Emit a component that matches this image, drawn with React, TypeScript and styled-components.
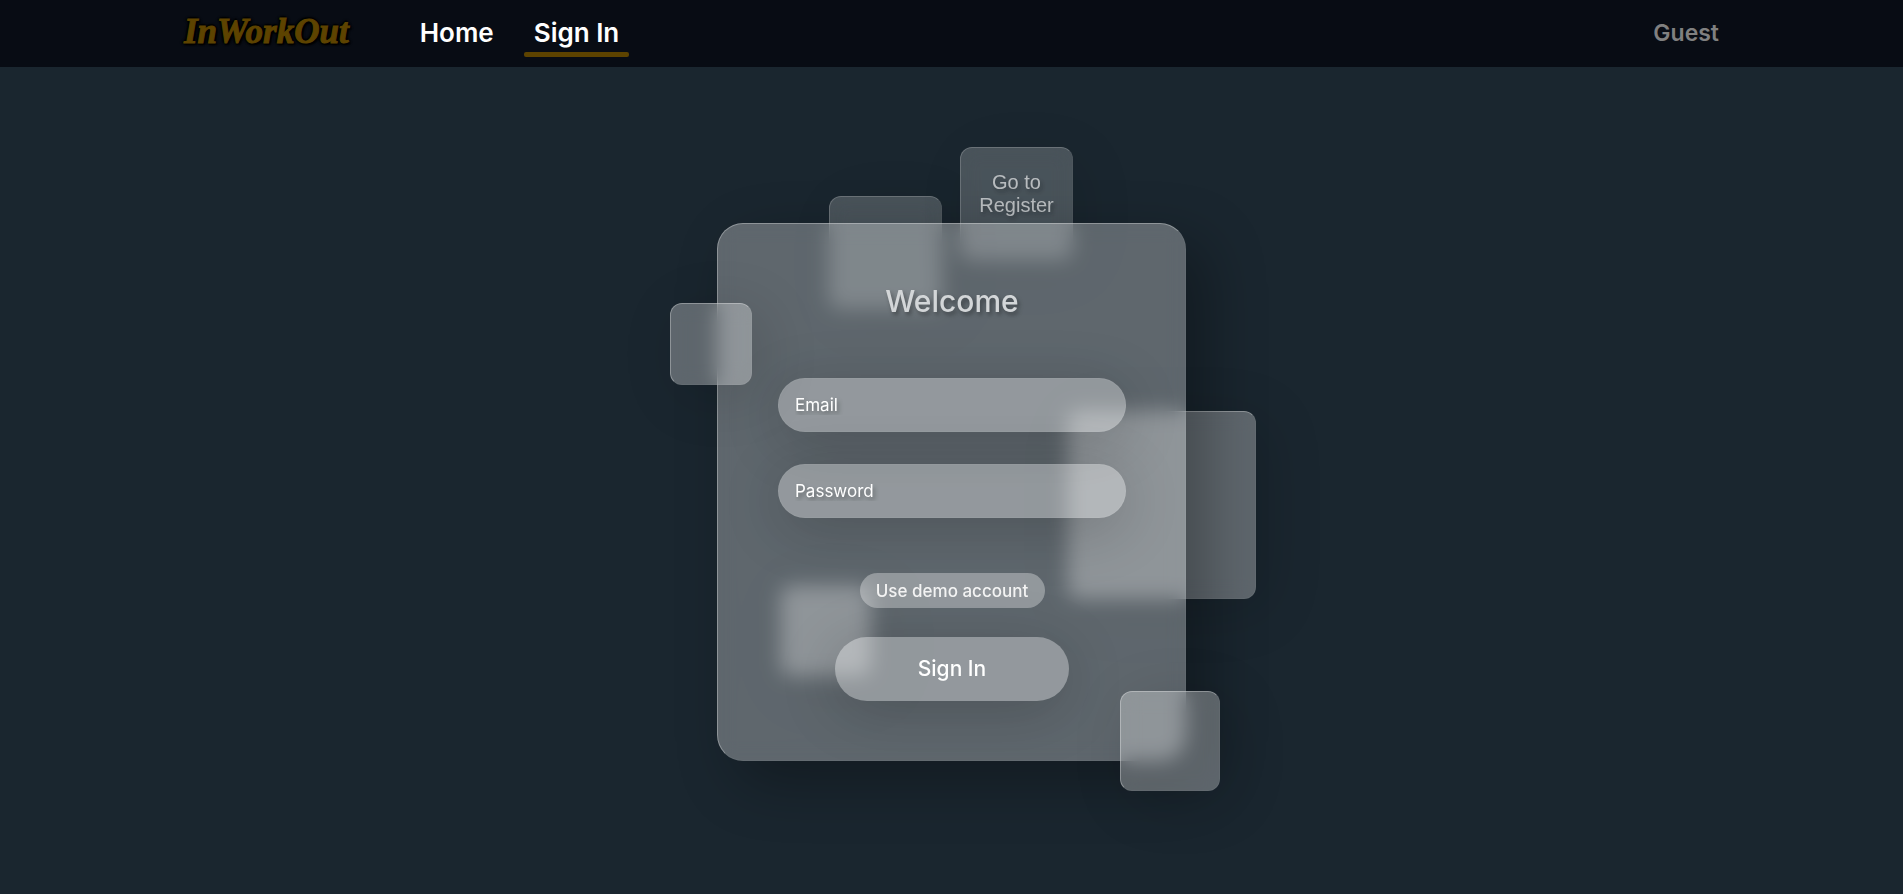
import React from 'react';
import styled, { createGlobalStyle, css } from 'styled-components';

const GlobalStyle = createGlobalStyle`
  *, *::before, *::after { box-sizing: border-box; }
  html, body, #root { height: 100%; }
  body {
    margin: 0;
    background: #1a262f;
    color: #fff;
    font-family: Inter, "Open Sans", sans-serif;
  }
`;

const Page = styled.div`
  display: flex;
  flex-direction: column;
  min-height: 100%;
`;

const NavBar = styled.header`
  display: flex;
  align-items: center;
  height: 67px;
  padding: 0 184px;
  background: #080c14;
`;

const Logo = styled.a`
  margin-right: 61px;
  padding-bottom: 3px;
  color: #5d4300;
  font: italic 700 35px/40px "Liberation Serif", serif;
  text-decoration: none;
  -webkit-text-stroke: 1px #5d4300;
  text-shadow: 2px 0 2px #000, -2px 0 2px #000, 0 2px 2px #000, 0 -2px 2px #000, 2px 2px 2px #000;
`;

const NavLinks = styled.nav`
  display: flex;
  gap: 20px;
`;

const NavLink = styled.a<{ $active?: boolean }>`
  position: relative;
  padding: 7px 10px 8px;
  color: #fff;
  font-size: 26px;
  font-weight: 600;
  line-height: 32px;
  text-decoration: none;

  &::after {
    content: "";
    position: absolute;
    inset: auto 0 0;
    height: 5px;
    border-radius: 2px;
    background: ${({ $active }) => ($active ? '#5d4300' : 'transparent')};
  }
`;

const UserName = styled.span`
  margin-left: auto;
  padding-bottom: 2px;
  color: #808080;
  font-size: 23px;
  font-weight: 600;
  line-height: 30px;
`;

const Main = styled.main`
  display: flex;
  flex: 1;
  justify-content: center;
  padding: 156px 20px 132px;
`;

const Stage = styled.div`
  position: relative;
  width: 469px;
`;

const textShadow = css`
  text-shadow: 2px 3px 4px rgba(0, 0, 0, 0.35);
`;

const glass = css`
  border: 1px solid rgba(255, 255, 255, 0.3);
  border-right-color: rgba(255, 255, 255, 0.04);
  border-bottom-color: rgba(255, 255, 255, 0.04);
  background: rgba(255, 255, 255, 0.3);
  backdrop-filter: blur(10px);
`;

const Tile = styled.div<{ $size: number; $x: number; $y: number; $dim?: boolean }>`
  ${glass}
  position: absolute;
  left: ${({ $x }) => $x}px;
  top: ${({ $y }) => $y}px;
  width: ${({ $size }) => $size}px;
  height: ${({ $size }) => $size}px;
  border-radius: 12px;
  box-shadow: 10px 10px 60px rgba(0, 0, 0, 0.14);
  opacity: ${({ $dim }) => ($dim ? 0.7 : 1)};
`;

const TileButton = styled(Tile)`
  ${textShadow}
  padding: 0 0 20px;
  color: #fff;
  font: 20px/23px "Liberation Sans", sans-serif;
`;

const Card = styled.form`
  ${glass}
  position: relative;
  display: flex;
  flex-direction: column;
  align-items: center;
  height: 538px;
  padding: 60px 59px 0 60px;
  border-radius: 26px;
  box-shadow: 20px 20px 60px rgba(0, 0, 0, 0.3);
`;

const Title = styled.h1`
  ${textShadow}
  margin: 0 0 60px;
  color: #d3d6d8;
  font-size: 30px;
  font-weight: 500;
  line-height: 34px;
`;

const Field = styled.input`
  ${textShadow}
  width: 100%;
  height: 54px;
  margin-bottom: 32px;
  padding: 0 16px;
  border: 1px solid rgba(255, 255, 255, 0.04);
  border-radius: 27px;
  outline: none;
  background: rgba(255, 255, 255, 0.33);
  box-shadow: 0 10px 60px rgba(0, 0, 0, 0.2);
  color: #fff;
  font: 400 17px/20px Inter, sans-serif;
  &::placeholder { color: #fff; opacity: 1; }
`;

const Pill = styled.button<{ $large?: boolean }>`
  width: ${({ $large }) => ($large ? 234 : 185)}px;
  height: ${({ $large }) => ($large ? 64 : 35)}px;
  margin-top: ${({ $large }) => ($large ? 29 : 23)}px;
  padding: 0;
  border: 0;
  border-radius: 32px;
  background: rgba(255, 255, 255, 0.33);
  box-shadow: ${({ $large }) => ($large ? '0 10px 60px rgba(0, 0, 0, 0.2)' : 'none')};
  color: ${({ $large }) => ($large ? '#fff' : '#f4f4f4')};
  font: ${({ $large }) => ($large ? '500 21px/24px' : '500 17px/20px')} Inter, sans-serif;
  white-space: nowrap;
`;

export default function App() {
  return (
    <>
      <GlobalStyle />
      <Page>
        <NavBar>
          <Logo href="#">InWorkOut</Logo>
          <NavLinks>
            <NavLink href="#">Home</NavLink>
            <NavLink href="#" $active>Sign In</NavLink>
          </NavLinks>
          <UserName>Guest</UserName>
        </NavBar>
        <Main>
          <Stage>
            <Tile $size={113} $x={112} $y={-27} $dim />
            <TileButton as="button" type="button" $size={113} $x={243} $y={-76} $dim>
              Go to<br />Register
            </TileButton>
            <Tile $size={188} $x={351} $y={188} />
            <Tile $size={90} $x={64} $y={363} />
            <Card onSubmit={(e: React.FormEvent) => e.preventDefault()}>
              <Title>Welcome</Title>
              <Field type="email" placeholder="Email" aria-label="Email" />
              <Field type="password" placeholder="Password" aria-label="Password" />
              <Pill type="button">Use demo account</Pill>
              <Pill type="submit" $large>Sign In</Pill>
            </Card>
            <Tile $size={82} $x={-47} $y={80} />
            <Tile $size={100} $x={403} $y={468} />
          </Stage>
        </Main>
      </Page>
    </>
  );
}
